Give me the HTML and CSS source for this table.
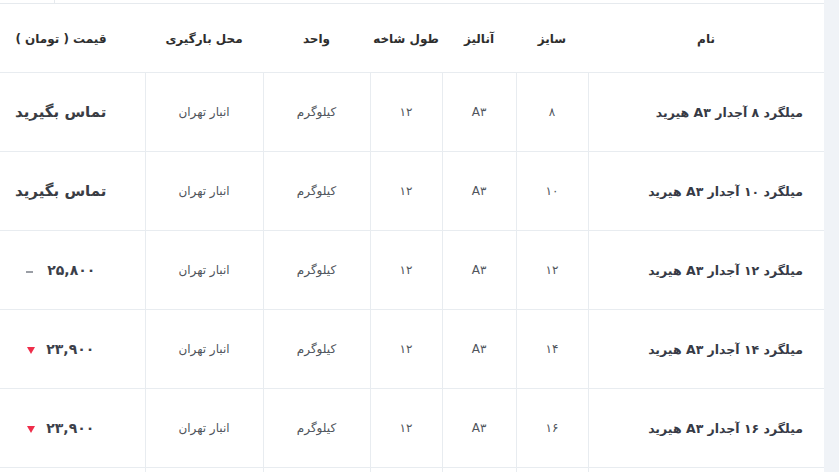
FILE: index.html
```html
<!DOCTYPE html>
<html lang="fa">
<head>
<meta charset="utf-8">
<title>قیمت میلگرد</title>
<link rel="stylesheet" href="styles.css">
</head>
<body>
<div class="panel" dir="rtl">
  <div class="prev-strip">
    <div class="prev-cell prev-main"></div>
    <div class="prev-cell prev-side"></div>
  </div>
  <div class="table-wrap">
    <table class="price-table">
      <colgroup>
        <col class="c-name"><col class="c-size"><col class="c-anal"><col class="c-len"><col class="c-unit"><col class="c-place"><col class="c-price">
      </colgroup>
      <thead>
        <tr>
          <th>نام</th>
          <th>سایز</th>
          <th>آنالیز</th>
          <th>طول شاخه</th>
          <th>واحد</th>
          <th>محل بارگیری</th>
          <th>قیمت ( تومان )</th>
        </tr>
      </thead>
      <tbody>
        <tr>
          <td class="name">میلگرد ۸ آجدار A۳ هیرید</td>
          <td>۸</td><td>A۳</td><td>۱۲</td><td>کیلوگرم</td><td>انبار تهران</td>
          <td class="price"><span class="contact">تماس بگیرید</span></td>
        </tr>
        <tr>
          <td class="name">میلگرد ۱۰ آجدار A۳ هیرید</td>
          <td>۱۰</td><td>A۳</td><td>۱۲</td><td>کیلوگرم</td><td>انبار تهران</td>
          <td class="price"><span class="contact">تماس بگیرید</span></td>
        </tr>
        <tr>
          <td class="name">میلگرد ۱۲ آجدار A۳ هیرید</td>
          <td>۱۲</td><td>A۳</td><td>۱۲</td><td>کیلوگرم</td><td>انبار تهران</td>
          <td class="price"><span class="amount">۲۵,۸۰۰</span><span class="flat"></span></td>
        </tr>
        <tr>
          <td class="name">میلگرد ۱۴ آجدار A۳ هیرید</td>
          <td>۱۴</td><td>A۳</td><td>۱۲</td><td>کیلوگرم</td><td>انبار تهران</td>
          <td class="price"><span class="amount">۲۳,۹۰۰</span><span class="down"></span></td>
        </tr>
        <tr>
          <td class="name">میلگرد ۱۶ آجدار A۳ هیرید</td>
          <td>۱۶</td><td>A۳</td><td>۱۲</td><td>کیلوگرم</td><td>انبار تهران</td>
          <td class="price"><span class="amount">۲۳,۹۰۰</span><span class="down"></span></td>
        </tr>
        <tr class="cut">
          <td></td><td></td><td></td><td></td><td></td><td></td><td></td>
        </tr>
      </tbody>
    </table>
  </div>
</div>
</body>
</html>
```
FILE: styles.css
```css
html, body {
  margin: 0;
  padding: 0;
}
body {
  background: #f0f3f7;
  font-family: "DejaVu Sans", "Noto Sans", sans-serif;
  height: 472px;
  overflow: hidden;
}
.panel {
  width: 824px;
  background: #ffffff;
  height: 472px;
}
.prev-strip {
  display: flex;
  height: 3px;
  border-bottom: 1px solid #e6eaee;
}
.prev-main {
  flex: 1;
}
.prev-side {
  width: 54px;
  border-right: 1px solid #e6eaee;
}
.table-wrap {
  overflow: hidden;
}
.price-table {
  border-collapse: collapse;
  table-layout: fixed;
  width: 847px;
}
.c-name { width: 236px; }
.c-size { width: 72px; }
.c-anal { width: 74px; }
.c-len { width: 72px; }
.c-unit { width: 107px; }
.c-place { width: 118px; }
.c-price { width: 168px; }

.price-table th {
  height: 66px;
  padding: 2px 0 0;
  font-size: 12px;
  font-weight: bold;
  color: #2e2e2e;
  text-align: center;
  border-bottom: 1px solid #e8ecf0;
}
.price-table td {
  height: 78px;
  padding: 0;
  font-size: 12px;
  color: #50555c;
  text-align: center;
  border-bottom: 1px solid #e8ecf0;
  border-left: 1px solid #e8ecf0;
}
.price-table td:last-child {
  border-left: none;
}
.price-table td.name {
  text-align: right;
  padding-right: 21px;
  font-weight: bold;
  color: #363a45;
  font-size: 12.5px;
}
.price-table td.price {
  white-space: nowrap;
}
.contact {
  font-size: 15px;
  font-weight: bold;
  color: #3a3d44;
}
.amount {
  font-size: 14px;
  font-weight: bold;
  color: #3c3f4a;
}
.flat {
  display: inline-block;
  width: 7px;
  height: 2px;
  background: #9a9ea5;
  margin-right: 14px;
  vertical-align: middle;
}
.down {
  display: inline-block;
  width: 0;
  height: 0;
  border-left: 4px solid transparent;
  border-right: 4px solid transparent;
  border-top: 7px solid #ef2d4a;
  margin-right: 11px;
  vertical-align: middle;
}
.price-table tr.cut td {
  height: 20px;
  border-bottom: none;
}
```
